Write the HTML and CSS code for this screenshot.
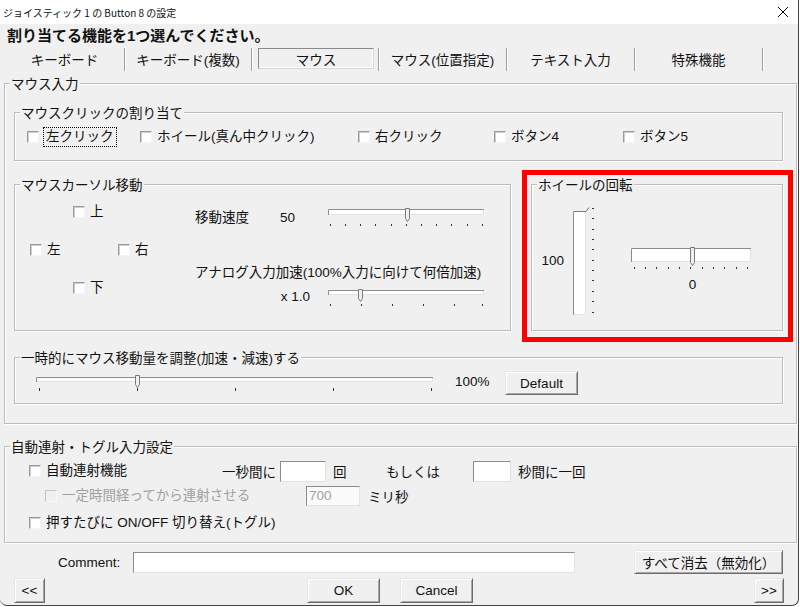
FILE: index.html
```html
<!DOCTYPE html>
<html lang="ja">
<head>
  <meta charset="UTF-8">
  <title>ジョイスティック 1 の Button 8 の設定</title>
  <link rel="stylesheet" href="styles.css">
</head>
<body>
<div class="window">
  <div class="titlebar">
    <span>ジョイスティック 1 の Button 8 の設定</span>
    <svg class="close" width="10" height="10" viewBox="0 0 10 10"><path d="M0 0L10 10M10 0L0 10" stroke="#000" stroke-width="1"/></svg>
  </div>
  <h1 class="prompt">割り当てる機能を1つ選んでください。</h1>

  <div class="tabs">
    <div class="tab">キーボード</div>
    <div class="tab">キーボード(複数)</div>
    <div class="tab active"><span class="pressed">マウス</span></div>
    <div class="tab">マウス(位置指定)</div>
    <div class="tab">テキスト入力</div>
    <div class="tab">特殊機能</div>
  </div>

  <div class="group mouse-group">
    <span class="caption">マウス入力</span>

    <div class="group click-group">
      <span class="caption">マウスクリックの割り当て</span>
      <label class="check"><span class="box"></span><span class="focus">左クリック</span></label>
      <label class="check"><span class="box"></span>ホイール(真ん中クリック)</label>
      <label class="check"><span class="box"></span>右クリック</label>
      <label class="check"><span class="box"></span>ボタン4</label>
      <label class="check"><span class="box"></span>ボタン5</label>
    </div>

    <div class="mid-row">
      <div class="group cursor-group">
        <span class="caption">マウスカーソル移動</span>
        <div class="dpad">
          <label class="check up"><span class="box"></span>上</label>
          <label class="check left"><span class="box"></span>左</label>
          <label class="check right"><span class="box"></span>右</label>
          <label class="check down"><span class="box"></span>下</label>
        </div>
        <div class="motion">
          <div class="speed-row">
            <span class="name">移動速度</span>
            <span class="num">50</span>
            <svg width="162" height="24" viewBox="0 0 162 24">
              <rect x="2" y="4" width="156" height="6" fill="#fff"/>
              <path d="M2.5 10V4.5H158" fill="none" stroke="#8c8c8c"/>
              <path d="M3 9.5H157.5V5" fill="none" stroke="#e3e3e3"/>
              <path d="M79.5 3.5h4v10l-2 3l-2-3z" fill="#f0f0f0" stroke="#7a7a7a"/>
              <path d="M4.5 19v2M19.5 19v2M34.5 19v2M49.5 19v2M65.5 19v2M80.5 19v2M95.5 19v2M110.5 19v2M125.5 19v2M141.5 19v2M156.5 19v2" stroke="#333"/>
            </svg>
          </div>
          <div class="accel-label">アナログ入力加速(100%入力に向けて何倍加速)</div>
          <div class="accel-row">
            <span class="mult">x 1.0</span>
            <svg width="162" height="24" viewBox="0 0 162 24">
              <rect x="2" y="4" width="156" height="5" fill="#fff"/>
              <path d="M2.5 9V4.5H158" fill="none" stroke="#8c8c8c"/>
              <path d="M3 8.5H157.5V5" fill="none" stroke="#e3e3e3"/>
              <path d="M32.5 3.5h4v9l-2 3l-2-3z" fill="#f0f0f0" stroke="#7a7a7a"/>
              <path d="M4.5 18v2M35.5 18v2M66.5 18v2M97.5 18v2M128.5 18v2M156.5 18v2" stroke="#333"/>
            </svg>
          </div>
        </div>
      </div>

      <div class="highlight">
        <div class="group wheel-group">
          <span class="caption">ホイールの回転</span>
          <span class="wheel-value">100</span>
          <svg class="wheel-v" width="34" height="120" viewBox="0 0 34 120">
            <rect x="7" y="3" width="13" height="112" fill="#fff"/>
            <path d="M7.5 115V3.5H20" fill="none" stroke="#8c8c8c"/>
            <path d="M8 114.5H19.5V4" fill="none" stroke="#e3e3e3"/>
            <rect x="7" y="3" width="13" height="9" fill="#f0f0f0"/>
            <path d="M7.5 11.5h12.5l3-4" fill="none" stroke="#7a7a7a"/>
            <path d="M26 8.5h2M26 18.5h2M26 29.5h2M26 39.5h2M26 49.5h2M26 60.5h2M26 70.5h2M26 80.5h2M26 91.5h2M26 101.5h2M26 112.5h2" stroke="#333"/>
          </svg>
          <div class="wheel-h">
            <svg width="128" height="28" viewBox="0 0 128 28">
              <rect x="4" y="4" width="120" height="14" fill="#fff"/>
              <path d="M4.5 18V4.5H124" fill="none" stroke="#8c8c8c"/>
              <path d="M5 17.5H123.5V5" fill="none" stroke="#e3e3e3"/>
              <path d="M63.5 3.5h4v15l-2 3l-2-3z" fill="#f0f0f0" stroke="#7a7a7a"/>
              <path d="M7.5 23v2M18.5 23v2M29.5 23v2M41.5 23v2M52.5 23v2M63.5 23v2M75.5 23v2M86.5 23v2M97.5 23v2M109.5 23v2M120.5 23v2" stroke="#333"/>
            </svg>
            <span class="zero">0</span>
          </div>
        </div>
      </div>
    </div>

    <div class="group temp-group">
      <span class="caption">一時的にマウス移動量を調整(加速・減速)する</span>
      <svg width="404" height="22" viewBox="0 0 404 22">
        <rect x="3" y="5" width="397" height="5" fill="#fff"/>
        <path d="M3.5 10V5.5H400" fill="none" stroke="#8c8c8c"/>
        <path d="M4 9.5H399.5V6" fill="none" stroke="#e3e3e3"/>
        <path d="M102.5 3.5h4v9l-2 3l-2-3z" fill="#f0f0f0" stroke="#7a7a7a"/>
        <path d="M6.5 16v3M104.5 16v3M202.5 16v3M300.5 16v3M398.5 16v3" stroke="#333"/>
      </svg>
      <span class="pct">100%</span>
      <span class="btn default">Default</span>
    </div>
  </div>

  <div class="group auto-group">
    <span class="caption">自動連射・トグル入力設定</span>
    <div class="fire-row">
      <label class="check fire-check"><span class="box"></span>自動連射機能</label>
      <span class="per-sec">一秒間に</span>
      <input class="field count" type="text" value="">
      <span class="unit">回</span>
      <span class="or">もしくは</span>
      <input class="field secs" type="text" value="">
      <span class="unit2">秒間に一回</span>
    </div>
    <div class="delay-row">
      <label class="check delay-check off"><span class="box"></span>一定時間経ってから連射させる</label>
      <input class="field ms" type="text" value="700" disabled>
      <span class="ms-unit">ミリ秒</span>
    </div>
    <div class="toggle-row">
      <label class="check"><span class="box"></span>押すたびに ON/OFF 切り替え(トグル)</label>
    </div>
  </div>

  <div class="comment-row">
    <span class="comment-label">Comment:</span>
    <input class="field comment" type="text" value="">
    <span class="btn clear">すべて消去（無効化）</span>
  </div>

  <div class="bottom-row">
    <span class="btn prev">&lt;&lt;</span>
    <span class="btn ok">OK</span>
    <span class="btn cancel">Cancel</span>
    <span class="btn next">&gt;&gt;</span>
  </div>
</div>
</body>
</html>
```

FILE: styles.css
```css
* { box-sizing: border-box; }
body { margin: 0; background: #fff; font-family: "Liberation Sans", "Noto Sans CJK JP", sans-serif; font-size: 13.5px; color: #111; }
.window { width: 799px; height: 606px; background: #f0f0f0; border-right: 1px solid #444; border-bottom: 1px solid #444; border-bottom-right-radius: 7px; border-bottom-left-radius: 7px; overflow: hidden; }

.titlebar { height: 24px; background: #fff; display: flex; align-items: center; justify-content: space-between; padding: 0 10px 0 3px; font-family: "Noto Sans CJK JP", sans-serif; font-size: 10px; }
.prompt { margin: 0; height: 23px; line-height: 23px; padding-left: 7px; font-size: 15px; font-weight: bold; }

.tabs { display: grid; grid-template-columns: 120px 127px 127px 128px 128px 128px; height: 23px; margin-top: 1px; padding-left: 5px; }
.tab { display: flex; align-items: center; justify-content: center; padding-bottom: 2px; border-right: 1px solid #a0a0a0; box-shadow: 1px 0 0 #fff; white-space: nowrap; }
.tab.active { justify-content: flex-start; align-items: flex-start; padding: 0 4px 0 6px; }
.pressed { flex: 1; height: 21px; display: flex; align-items: center; justify-content: center; border: 1px solid; border-color: #8a8a8a #d8d8d8 #d8d8d8 #8a8a8a; box-shadow: inset -1px -1px 0 #fff; }

.group { position: relative; border: 1px solid #bcbcbc; box-shadow: inset 1px 1px 0 #fff, 1px 1px 0 #fff; }
.caption { position: absolute; top: -7px; left: 5px; padding: 0 1px; line-height: 16px; background: #f0f0f0; white-space: nowrap; }

.check { display: flex; align-items: center; height: 16px; line-height: 16px; white-space: nowrap; }
.box { width: 12px; height: 12px; margin-right: 5px; flex: none; background: #fff; border: 1px solid; border-color: #9a9a9a #f4f4f4 #f4f4f4 #9a9a9a; box-shadow: inset 1px 1px 0 #cfcfcf; }
.focus { outline: 1px dotted #000; padding: 1px 2px; line-height: 16px; }
.check.off { color: #a0a0a0; }
.check.off .box { background: #f0f0f0; border-color: #c4c4c4 #fafafa #fafafa #c4c4c4; box-shadow: none; }

.mouse-group { margin: 12px 0 0 4px; width: 793px; height: 341px; padding: 28px 0 0 9px; }
.click-group { width: 769px; height: 49px; padding: 16px 0 0 12px; display: grid; grid-template-columns: 113px 218px 136px 129px auto; }

.mid-row { display: flex; align-items: flex-start; margin-top: 9px; }
.cursor-group { width: 497px; height: 147px; margin-top: 14px; display: flex; }
.dpad { width: 180px; padding: 19px 0 0 15px; display: grid; grid-template-columns: 43px 45px 50px; grid-template-rows: 16px 16px 16px; row-gap: 22px; }
.dpad .up { grid-column: 2; grid-row: 1; }
.dpad .left { grid-column: 1; grid-row: 2; }
.dpad .right { grid-column: 3; grid-row: 2; }
.dpad .down { grid-column: 2; grid-row: 3; }
.motion { padding-top: 20px; }
.speed-row { display: flex; align-items: flex-start; height: 24px; }
.speed-row .name { width: 85px; margin-top: 5px; line-height: 16px; }
.speed-row .num { width: 46px; margin-top: 5px; line-height: 16px; }
.accel-label { margin-top: 36px; line-height: 16px; white-space: nowrap; }
.accel-row { display: flex; align-items: flex-start; margin-top: 5px; }
.mult { width: 131px; padding-right: 16px; margin-top: 3px; text-align: right; line-height: 16px; }

.highlight { margin-left: 11px; border: 5px solid #f00; padding: 9px 5px 6px 4px; }
.wheel-group { width: 252px; height: 147px; display: flex; align-items: flex-start; }
.wheel-value { width: 26px; margin: 68px 0 0 6px; text-align: right; line-height: 16px; }
.wheel-v { margin: 15px 0 0 2px; }
.wheel-h { margin: 59px 0 0 27px; display: flex; flex-direction: column; }
.zero { margin-top: 5px; padding-left: 3px; text-align: center; line-height: 16px; }

.temp-group { width: 769px; height: 47px; margin-top: 15px; padding: 14px 0 0 18px; display: flex; align-items: flex-start; }
.pct { width: 35px; margin: 2px 0 0 18px; line-height: 16px; }

.btn { display: flex; align-items: center; justify-content: center; height: 24px; background: #f0f0f0; border: 1px solid; border-color: #e6e6e6 #6d6d6d #6d6d6d #e6e6e6; box-shadow: inset 1px 1px 0 #fff, inset -1px -1px 0 #a8a8a8; white-space: nowrap; }
.default { width: 73px; margin: -1px 0 0 15px; }

.field { height: 21px; padding: 0 2px; font: inherit; color: #111; background: #fff; border: 1px solid; border-color: #8c8c8c #e3e3e3 #e3e3e3 #8c8c8c; outline: none; }
.field:disabled { color: #a0a0a0; background: #fafafa; }

.auto-group { margin: 22px 0 0 4px; width: 793px; height: 97px; padding-top: 13px; }
.fire-row { display: flex; align-items: center; height: 22px; padding-left: 24px; }
.fire-check { width: 186px; }
.per-sec { width: 61px; text-align: right; white-space: nowrap; }
.count { width: 46px; margin-left: 4px; }
.unit { width: 14px; margin-left: 7px; }
.or { width: 44px; margin-left: 39px; white-space: nowrap; }
.secs { width: 38px; margin-left: 43px; }
.unit2 { margin-left: 7px; white-space: nowrap; }
.delay-row { display: flex; align-items: center; height: 21px; margin-top: 3px; padding-left: 40px; }
.delay-check { width: 261px; }
.ms { width: 54px; height: 20px; }
.ms-unit { margin-left: 8px; }
.toggle-row { margin-top: 9px; padding-left: 24px; }

.comment-row { display: flex; align-items: center; height: 26px; margin-top: 6px; padding-left: 58px; }
.comment-label { width: 75px; }
.comment { width: 442px; }
.clear { width: 149px; margin-left: 59px; }

.bottom-row { display: flex; height: 25px; margin-top: 3px; padding: 0 14px; }
.bottom-row .btn { height: 25px; }
.prev { width: 31px; }
.ok { width: 73px; margin-left: 262px; }
.cancel { width: 73px; margin-left: 20px; }
.next { width: 30px; margin-left: auto; }
```
